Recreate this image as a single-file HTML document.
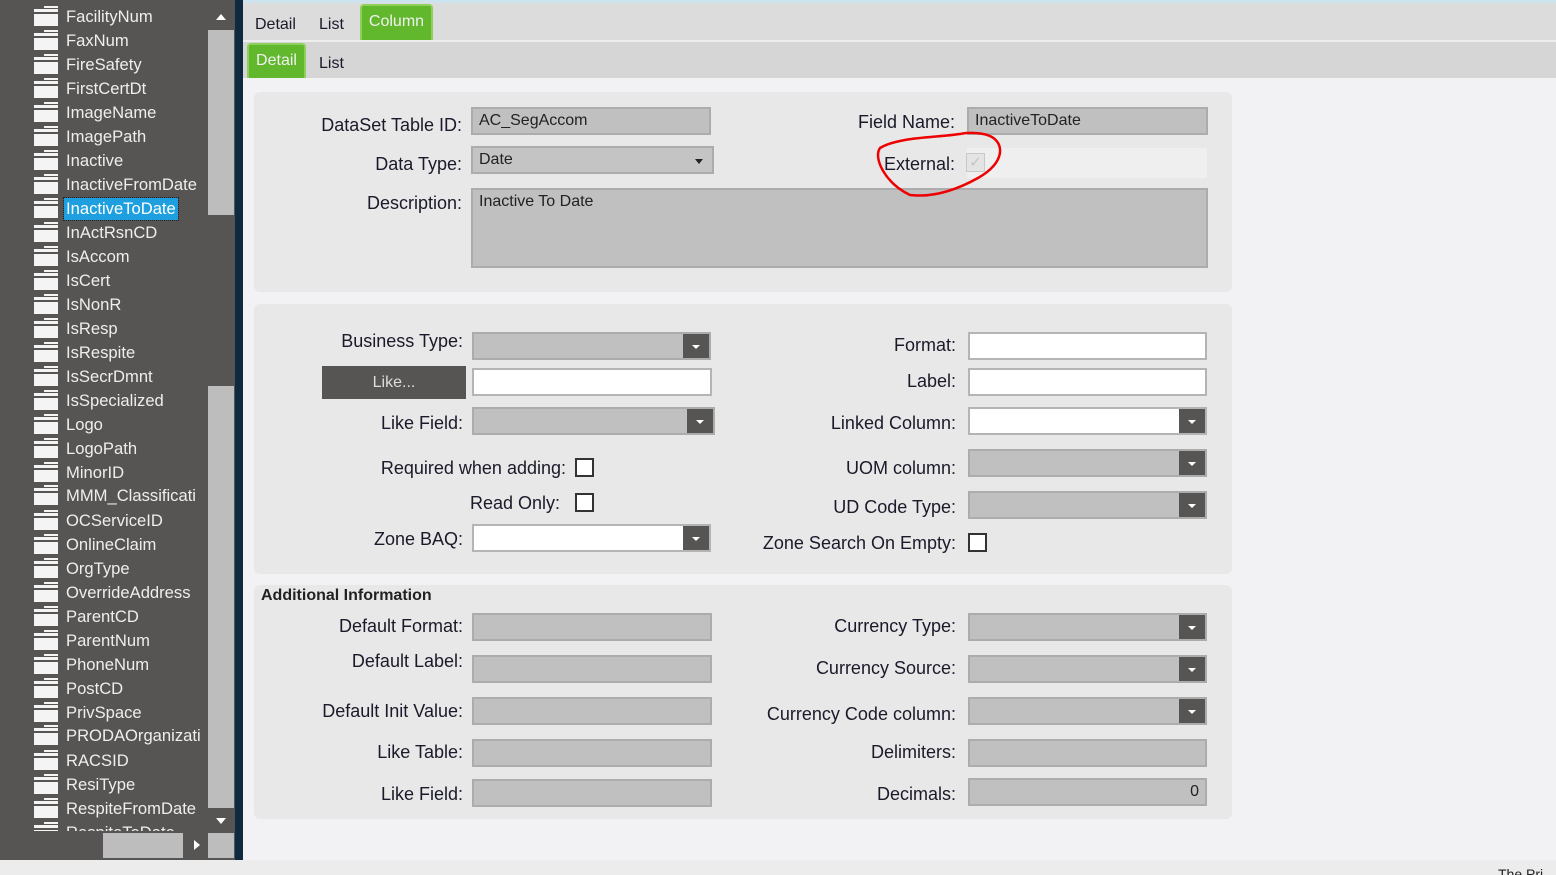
<!DOCTYPE html>
<html><head><meta charset="utf-8"><style>
*{margin:0;padding:0;box-sizing:border-box}
html,body{width:1556px;height:875px;overflow:hidden}
body{background:#f2f2f4;font-family:"Liberation Sans",Arial,sans-serif;position:relative;color:#1a1a2a}
.a{position:absolute}
#side{left:0;top:0;width:235px;height:860px;background:#575553}
.it{position:absolute;left:34px;height:22px;color:#eee;font-size:16.6px;line-height:22px;white-space:nowrap}
.it i{position:absolute;left:0;top:3px;width:24px;height:17px;border-top:3px solid #f4f4f4}
.it i:before{content:"";position:absolute;left:0;top:2px;width:24px;height:12px;background:#f4f4f4}
.it i:after{content:"";position:absolute;left:10px;top:-6px;width:14px;height:2px;background:#f4f4f4}
.it span{position:absolute;left:30px;top:0;padding:0 2px}
.lb{position:absolute;font-size:18px;text-align:right;white-space:nowrap;line-height:20px}
.f{position:absolute;height:28px;background:#c0c0c0;border:2px solid #acacac;font-size:16px;padding:0 6px;line-height:24px;color:#222}
.w{background:#fff;border-color:#b4b4b4}
.dd{position:absolute;right:0;top:0;bottom:0;width:26px;background:#575553}
.dd:after{content:"";position:absolute;left:9px;top:11px;border-left:4px solid transparent;border-right:4px solid transparent;border-top:4px solid #fff}
.cb{position:absolute;width:19px;height:19px;border:2px solid #333;background:#fff}
.pn{position:absolute;background:#e8e8e8;border-radius:6px}
.tab{position:absolute;font-size:16px;line-height:20px}
.gt{position:absolute;background:#62b82c;border:2px solid #8fd05c;border-bottom:none;border-radius:4px 4px 0 0;color:#f0f0f0;font-size:16px;text-align:center}
</style></head><body>
<div class="a" style="left:0;top:0;width:1556px;height:3px;background:#cde4ef"></div>
<div id="side" class="a">
<div class="a" style="left:0;top:0;width:235px;height:831px;overflow:hidden">
<div class="it" style="top:6px"><i></i><span>FacilityNum</span></div>
<div class="it" style="top:30px"><i></i><span>FaxNum</span></div>
<div class="it" style="top:54px"><i></i><span>FireSafety</span></div>
<div class="it" style="top:78px"><i></i><span>FirstCertDt</span></div>
<div class="it" style="top:102px"><i></i><span>ImageName</span></div>
<div class="it" style="top:126px"><i></i><span>ImagePath</span></div>
<div class="it" style="top:150px"><i></i><span>Inactive</span></div>
<div class="it" style="top:174px"><i></i><span>InactiveFromDate</span></div>
<div class="it" style="top:198px"><i></i><span style="background:#1ea0e0;outline:1px dotted #222;color:#fff">InactiveToDate</span></div>
<div class="it" style="top:222px"><i></i><span>InActRsnCD</span></div>
<div class="it" style="top:246px"><i></i><span>IsAccom</span></div>
<div class="it" style="top:270px"><i></i><span>IsCert</span></div>
<div class="it" style="top:294px"><i></i><span>IsNonR</span></div>
<div class="it" style="top:318px"><i></i><span>IsResp</span></div>
<div class="it" style="top:342px"><i></i><span>IsRespite</span></div>
<div class="it" style="top:366px"><i></i><span>IsSecrDmnt</span></div>
<div class="it" style="top:390px"><i></i><span>IsSpecialized</span></div>
<div class="it" style="top:414px"><i></i><span>Logo</span></div>
<div class="it" style="top:438px"><i></i><span>LogoPath</span></div>
<div class="it" style="top:462px"><i></i><span>MinorID</span></div>
<div class="it" style="top:485px"><i></i><span>MMM_Classificati</span></div>
<div class="it" style="top:510px"><i></i><span>OCServiceID</span></div>
<div class="it" style="top:534px"><i></i><span>OnlineClaim</span></div>
<div class="it" style="top:558px"><i></i><span>OrgType</span></div>
<div class="it" style="top:582px"><i></i><span>OverrideAddress</span></div>
<div class="it" style="top:606px"><i></i><span>ParentCD</span></div>
<div class="it" style="top:630px"><i></i><span>ParentNum</span></div>
<div class="it" style="top:654px"><i></i><span>PhoneNum</span></div>
<div class="it" style="top:678px"><i></i><span>PostCD</span></div>
<div class="it" style="top:702px"><i></i><span>PrivSpace</span></div>
<div class="it" style="top:725px"><i></i><span>PRODAOrganizati</span></div>
<div class="it" style="top:750px"><i></i><span>RACSID</span></div>
<div class="it" style="top:774px"><i></i><span>ResiType</span></div>
<div class="it" style="top:798px"><i></i><span>RespiteFromDate</span></div>
<div class="it" style="top:822px"><i></i><span>RespiteToDate</span></div>
</div>
<div class="a" style="left:208px;top:30px;width:26px;height:185px;background:#bdbdbd"></div>
<div class="a" style="left:208px;top:386px;width:26px;height:422px;background:#bdbdbd"></div>
<div class="a" style="left:216px;top:14px;border-left:5px solid transparent;border-right:5px solid transparent;border-bottom:6px solid #fff"></div>
<div class="a" style="left:216px;top:818px;border-left:5px solid transparent;border-right:5px solid transparent;border-top:6px solid #fff"></div>
<div class="a" style="left:103px;top:833px;width:80px;height:25px;background:#bdbdbd"></div>
<div class="a" style="left:208px;top:833px;width:26px;height:25px;background:#bdbdbd"></div>
<div class="a" style="left:194px;top:840px;border-top:5px solid transparent;border-bottom:5px solid transparent;border-left:6px solid #fff"></div>
</div>
<div class="a" style="left:235px;top:0;width:8px;height:860px;background:#0f2a3f"></div>
<div class="a" style="left:0;top:860px;width:1556px;height:15px;background:#ececec"></div>
<div class="a" style="left:1498px;top:866px;font-size:14px;color:#222">The Pri</div>

<div class="a" style="left:243px;top:3px;width:1313px;height:37px;background:#dcdcdc"></div>
<div class="a" style="left:243px;top:40px;width:1313px;height:38px;background:#d6d6d6;border-top:2px solid #eee"></div>
<div class="tab" style="left:255px;top:15px">Detail</div>
<div class="tab" style="left:319px;top:15px">List</div>
<div class="gt" style="left:360px;top:4px;width:73px;height:36px;line-height:32px">Column</div>
<div class="gt" style="left:247px;top:43px;width:59px;height:35px;line-height:32px">Detail</div>
<div class="tab" style="left:319px;top:54px">List</div>

<div class="pn" style="left:254px;top:92px;width:978px;height:200px"></div>
<div class="pn" style="left:254px;top:304px;width:978px;height:270px"></div>
<div class="pn" style="left:254px;top:585px;width:978px;height:234px"></div>

<div class="lb" style="right:1094px;top:115px">DataSet Table ID:</div>
<div class="f" style="left:471px;top:107px;width:240px">AC_SegAccom</div>
<div class="lb" style="right:1094px;top:154px">Data Type:</div>
<div class="f" style="left:471px;top:146px;width:243px;background:#c4c4c4">Date<span class="a" style="right:9px;top:11px;border-left:4px solid transparent;border-right:4px solid transparent;border-top:5px solid #222"></span></div>
<div class="lb" style="right:1094px;top:193px">Description:</div>
<div class="f" style="left:471px;top:188px;width:737px;height:80px">Inactive To Date</div>
<div class="lb" style="right:601px;top:112px">Field Name:</div>
<div class="f" style="left:967px;top:107px;width:241px">InactiveToDate</div>
<div class="a" style="left:967px;top:148px;width:240px;height:30px;background:#efefef"></div>
<div class="lb" style="right:601px;top:154px">External:</div>
<div class="a" style="left:966px;top:153px;width:19px;height:19px;border:1px solid #c8c8c8;background:#e4e4e4;color:#c4c4c4;font-size:15px;line-height:17px;text-align:center">✓</div>
<svg class="a" style="left:870px;top:128px" width="140" height="75"><path d="M96 5 C70 10 30 8 10 20 C3 30 15 55 40 67 C65 70 90 60 108 50 C135 35 135 15 120 8 C110 4 100 5 96 5" fill="none" stroke="#e00" stroke-width="2.5"/></svg>

<div class="lb" style="right:1093px;top:331px">Business Type:</div>
<div class="f" style="left:472px;top:332px;width:239px"><div class="dd"></div></div>
<div class="a" style="left:322px;top:366px;width:144px;height:33px;background:#575553;color:#ddd;font-size:16px;text-align:center;line-height:33px">Like...</div>
<div class="f w" style="left:472px;top:368px;width:240px"></div>
<div class="lb" style="right:1093px;top:413px">Like Field:</div>
<div class="f" style="left:472px;top:407px;width:243px"><div class="dd"></div></div>
<div class="lb" style="right:990px;top:458px">Required when adding:</div>
<div class="cb" style="left:575px;top:458px"></div>
<div class="lb" style="right:996px;top:493px">Read Only:</div>
<div class="cb" style="left:575px;top:493px"></div>
<div class="lb" style="right:1093px;top:529px">Zone BAQ:</div>
<div class="f w" style="left:472px;top:524px;width:239px"><div class="dd"></div></div>

<div class="lb" style="right:600px;top:335px">Format:</div>
<div class="f w" style="left:968px;top:332px;width:239px"></div>
<div class="lb" style="right:600px;top:371px">Label:</div>
<div class="f w" style="left:968px;top:368px;width:239px"></div>
<div class="lb" style="right:600px;top:413px">Linked Column:</div>
<div class="f w" style="left:968px;top:407px;width:239px"><div class="dd"></div></div>
<div class="lb" style="right:600px;top:458px">UOM column:</div>
<div class="f" style="left:968px;top:449px;width:239px"><div class="dd"></div></div>
<div class="lb" style="right:600px;top:497px">UD Code Type:</div>
<div class="f" style="left:968px;top:491px;width:239px"><div class="dd"></div></div>
<div class="lb" style="right:600px;top:533px">Zone Search On Empty:</div>
<div class="cb" style="left:968px;top:533px"></div>

<div class="a" style="left:261px;top:587px;font-size:16px;font-weight:bold;color:#222">Additional Information</div>
<div class="lb" style="right:1093px;top:616px">Default Format:</div>
<div class="f" style="left:472px;top:613px;width:240px"></div>
<div class="lb" style="right:1093px;top:651px">Default Label:</div>
<div class="f" style="left:472px;top:655px;width:240px"></div>
<div class="lb" style="right:1093px;top:701px">Default Init Value:</div>
<div class="f" style="left:472px;top:697px;width:240px"></div>
<div class="lb" style="right:1093px;top:742px">Like Table:</div>
<div class="f" style="left:472px;top:739px;width:240px"></div>
<div class="lb" style="right:1093px;top:784px">Like Field:</div>
<div class="f" style="left:472px;top:779px;width:240px"></div>

<div class="lb" style="right:600px;top:616px">Currency Type:</div>
<div class="f" style="left:968px;top:613px;width:239px"><div class="dd"></div></div>
<div class="lb" style="right:600px;top:658px">Currency Source:</div>
<div class="f" style="left:968px;top:655px;width:239px"><div class="dd"></div></div>
<div class="lb" style="right:600px;top:704px">Currency Code column:</div>
<div class="f" style="left:968px;top:697px;width:239px"><div class="dd"></div></div>
<div class="lb" style="right:600px;top:742px">Delimiters:</div>
<div class="f" style="left:968px;top:739px;width:239px"></div>
<div class="lb" style="right:600px;top:784px">Decimals:</div>
<div class="f" style="left:968px;top:778px;width:239px;text-align:right">0</div>
</body></html>
